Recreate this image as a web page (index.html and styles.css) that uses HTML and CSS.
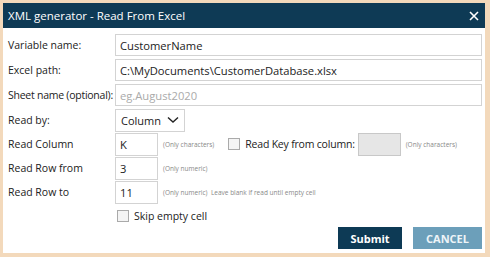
FILE: index.html
```html
<!DOCTYPE html>
<html lang="en">
<head>
  <meta charset="UTF-8">
  <title>XML generator - Read From Excel</title>
  <link rel="stylesheet" href="styles.css">
</head>
<body>
  <div class="dialog">
    <div class="titlebar">
      <span class="title">XML generator - Read From Excel</span>
      <svg class="close" width="10" height="10" viewBox="0 0 10 10">
        <path d="M1 1 L9 9 M9 1 L1 9" stroke="#fff" stroke-width="1.6"/>
      </svg>
    </div>

    <div class="form">
      <div class="row">
        <label class="lbl">Variable name:</label>
        <input class="field wide" type="text" value="CustomerName">
      </div>
      <div class="row">
        <label class="lbl">Excel path:</label>
        <input class="field wide" type="text" value="C:\MyDocuments\CustomerDatabase.xlsx">
      </div>
      <div class="row">
        <label class="lbl long">Sheet name (optional):</label>
        <input class="field wide" type="text" placeholder="eg.August2020">
      </div>
      <div class="row tight">
        <label class="lbl">Read by:</label>
        <div class="select">
          <span>Column</span>
          <svg width="12" height="8" viewBox="0 0 12 8">
            <path d="M1 1.5 L6 6 L11 1.5" fill="none" stroke="#222" stroke-width="1.4"/>
          </svg>
        </div>
      </div>
      <div class="row tight">
        <label class="lbl">Read Column</label>
        <input class="field small" type="text" value="K">
        <span class="hint">(Only characters)</span>
        <span class="check key"><span class="box"></span>Read Key from column:</span>
        <input class="field small disabled" type="text" disabled>
        <span class="hint">(Only characters)</span>
      </div>
      <div class="row tight">
        <label class="lbl">Read Row from</label>
        <input class="field small" type="text" value="3">
        <span class="hint">(Only numeric)</span>
      </div>
      <div class="row tight">
        <label class="lbl">Read Row to</label>
        <input class="field small" type="text" value="11">
        <span class="hint">(Only numeric)&nbsp; Leave blank if read until empty cell</span>
      </div>
      <div class="row last">
        <span class="lbl"></span>
        <span class="check"><span class="box"></span>Skip empty cell</span>
      </div>
      <div class="actions">
        <button class="btn submit">Submit</button>
        <button class="btn cancel">CANCEL</button>
      </div>
    </div>
  </div>
</body>
</html>
```

FILE: styles.css
```css
body {
  margin: 0;
  background-color: #f3d9bb;
  font-family: "Open Sans", "Noto Sans", sans-serif;
  color: #222;
}
.dialog {
  width: 482px;
  height: 250px;
  margin: 3px 0 0 3px;
  background-color: #fff;
}
.titlebar {
  height: 25px;
  background-color: #0e3a55;
  display: flex;
  align-items: center;
  justify-content: space-between;
  padding: 0 5px 0 5px;
}
.title {
  color: #fff;
  font-size: 11.5px;
}
.close {
  margin-right: 1px;
}
.form {
  padding: 6px 3px 0 5px;
}
.row {
  display: flex;
  align-items: center;
  height: 22px;
  margin-bottom: 3px;
}
.row.tight {
  margin-bottom: 2px;
}
.row.last {
  margin-bottom: 0;
}
.lbl {
  width: 107px;
  flex: none;
  font-size: 10.5px;
  white-space: nowrap;
}
.lbl.long {
  width: 105px;
  margin-right: 2px;
  letter-spacing: -0.25px;
}
.field {
  height: 22px;
  box-sizing: border-box;
  border: 1px solid #d3d3d3;
  font-family: inherit;
  font-size: 11.2px;
  color: #222;
  padding: 0 4px;
  outline: none;
}
.field::placeholder {
  color: #aaa;
}
.wide {
  width: 367px;
}
.small {
  width: 43px;
  height: 23px;
}
.disabled {
  background-color: #e6e6e6;
  border-color: #c8c8c8;
}
.hint {
  font-size: 6.5px;
  color: #888;
  margin-left: 5px;
  white-space: nowrap;
}
.select {
  width: 70px;
  height: 23px;
  box-sizing: border-box;
  border: 1px solid #d3d3d3;
  display: flex;
  align-items: center;
  justify-content: space-between;
  padding: 0 5px 0 5px;
  font-size: 11px;
}
.check {
  display: flex;
  align-items: center;
  font-size: 10.5px;
}
.check .box {
  width: 10px;
  height: 10px;
  border: 1px solid #aaa;
  background-color: #f4f4f4;
  margin-right: 5px;
}
.row > .check {
  margin-left: 2px;
}
.check.key {
  margin-left: 14px;
  margin-right: 3px;
  letter-spacing: -0.2px;
}
.actions {
  display: flex;
  justify-content: flex-end;
  gap: 11px;
}
.btn {
  height: 22px;
  border: none;
  color: #fff;
  font-family: inherit;
  font-size: 11px;
  font-weight: bold;
  cursor: pointer;
}
.submit {
  width: 64px;
  background-color: #0d3a55;
}
.cancel {
  width: 69px;
  background-color: #6c9fba;
  color: #eef4f8;
}
```
